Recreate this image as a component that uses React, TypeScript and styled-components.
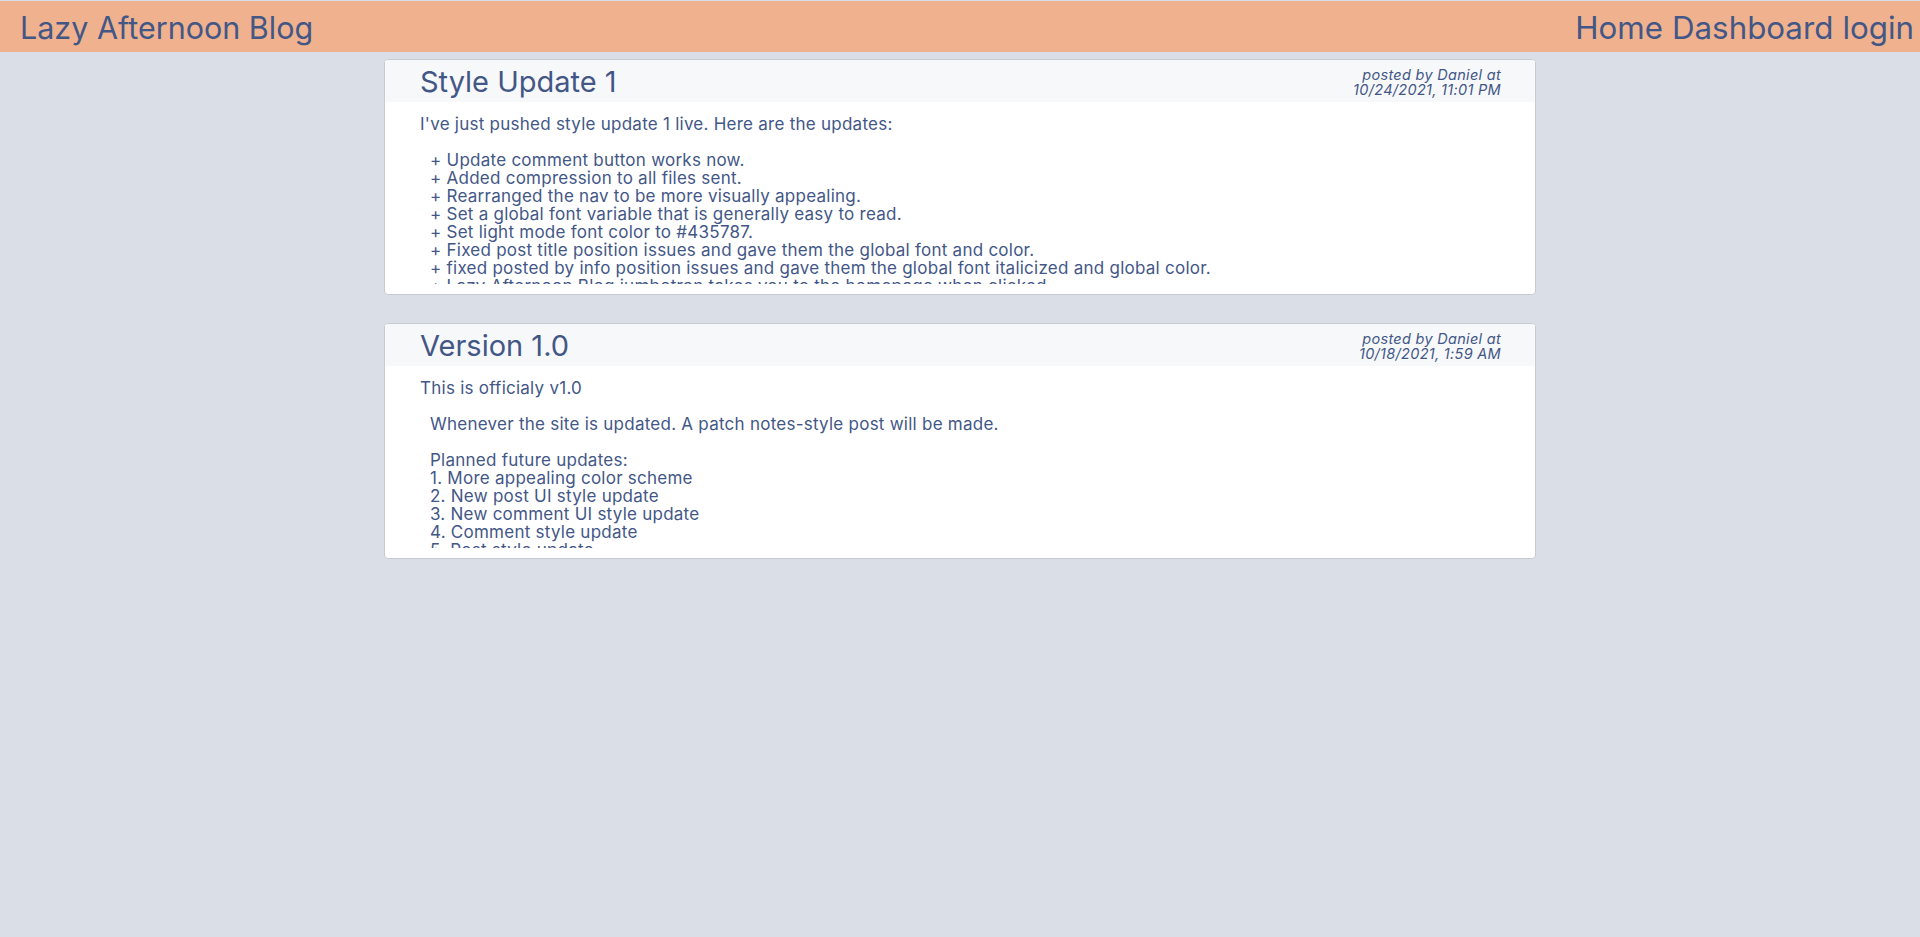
import React from "react";
import styled, { createGlobalStyle } from "styled-components";

const GlobalStyle = createGlobalStyle`
  html, body {
    margin: 0;
    padding: 0;
    background: #dadfe7;
    font-family: Inter, "Noto Sans", sans-serif;
    color: #435787;
  }
  * { box-sizing: border-box; }
`;

const Page = styled.div`
  padding-top: 1px;
  min-height: 937px;
`;

const Nav = styled.nav`
  display: flex;
  align-items: center;
  justify-content: space-between;
  height: 51px;
  background: #f0b28e;
  padding: 2px 6px 0 20px;
`;

const Brand = styled.a`
  font-size: 30.5px;
  color: #435787;
  text-decoration: none;
  cursor: pointer;
`;

const NavLinks = styled.div`
  display: flex;
  gap: 9px;
`;

const NavLink = styled.a`
  font-size: 31.3px;
  color: #435787;
  text-decoration: none;
  cursor: pointer;
`;

const Feed = styled.main`
  width: 60%;
  margin: 0 auto;
  padding-top: 7px;
  display: flex;
  flex-direction: column;
  gap: 28px;
`;

const Card = styled.article`
  background: #ffffff;
  border: 1px solid #c8ccd2;
  border-radius: 4px;
  height: 236px;
  overflow: hidden;
`;

const CardHeader = styled.header`
  display: flex;
  align-items: center;
  justify-content: space-between;
  height: 42px;
  background: #f7f8fa;
  padding: 0 34px 0 35px;
`;

const Title = styled.h2`
  margin: 0;
  font-size: 29px;
  font-weight: 400;
  color: #435787;
`;

const Meta = styled.div`
  display: flex;
  flex-direction: column;
  align-items: flex-end;
  font-style: italic;
  font-size: 14.5px;
  letter-spacing: 0.3px;
  line-height: 15px;
  padding-top: 1px;
`;

const MetaLine = styled.span`
  display: block;
  height: 15px;
`;

const CardBody = styled.div`
  padding: 13px 35px 0;
`;

const Content = styled.div`
  height: 169px;
  overflow: hidden;
  font-size: 17px;
  letter-spacing: 0.25px;
  line-height: 18px;
`;

const Line = styled.div<{ $indent?: boolean }>`
  min-height: 18px;
  padding-left: ${(p) => (p.$indent ? "10px" : "0")};
  white-space: pre-wrap;
`;

type PostLine = { text: string; indent?: boolean };
type Post = { title: string; author: string; date: string; lines: PostLine[] };

const posts: Post[] = [
  {
    title: "Style Update 1",
    author: "Daniel",
    date: "10/24/2021, 11:01 PM",
    lines: [
      { text: "I've just pushed style update 1 live. Here are the updates:" },
      { text: "" },
      { text: "+ Update comment button works now.", indent: true },
      { text: "+ Added compression to all files sent.", indent: true },
      { text: "+ Rearranged the nav to be more visually appealing.", indent: true },
      { text: "+ Set a global font variable that is generally easy to read.", indent: true },
      { text: "+ Set light mode font color to #435787.", indent: true },
      { text: "+ Fixed post title position issues and gave them the global font and color.", indent: true },
      { text: "+ fixed posted by info position issues and gave them the global font italicized and global color.", indent: true },
      { text: "+ Lazy Afternoon Blog jumbotron takes you to the homepage when clicked.", indent: true },
      { text: "+ Posts are now displayed in cards.", indent: true },
    ],
  },
  {
    title: "Version 1.0",
    author: "Daniel",
    date: "10/18/2021, 1:59 AM",
    lines: [
      { text: "This is officialy v1.0" },
      { text: "" },
      { text: "Whenever the site is updated. A patch notes-style post will be made.", indent: true },
      { text: "" },
      { text: "Planned future updates:", indent: true },
      { text: "1. More appealing color scheme", indent: true },
      { text: "2. New post UI style update", indent: true },
      { text: "3. New comment UI style update", indent: true },
      { text: "4. Comment style update", indent: true },
      { text: "5. Post style update", indent: true },
      { text: "6. Dark mode", indent: true },
    ],
  },
];

export default function App() {
  return (
    <Page>
      <GlobalStyle />
      <Nav>
        <Brand>Lazy Afternoon Blog</Brand>
        <NavLinks>
          <NavLink>Home</NavLink>
          <NavLink>Dashboard</NavLink>
          <NavLink>login</NavLink>
        </NavLinks>
      </Nav>
      <Feed>
        {posts.map((post) => (
          <Card key={post.title}>
            <CardHeader>
              <Title>{post.title}</Title>
              <Meta>
                <MetaLine>posted by {post.author} at</MetaLine>
                <MetaLine>{post.date}</MetaLine>
              </Meta>
            </CardHeader>
            <CardBody>
              <Content>
                {post.lines.map((l, i) => (
                  <Line key={i} $indent={l.indent}>
                    {l.text}
                  </Line>
                ))}
              </Content>
            </CardBody>
          </Card>
        ))}
      </Feed>
    </Page>
  );
}
